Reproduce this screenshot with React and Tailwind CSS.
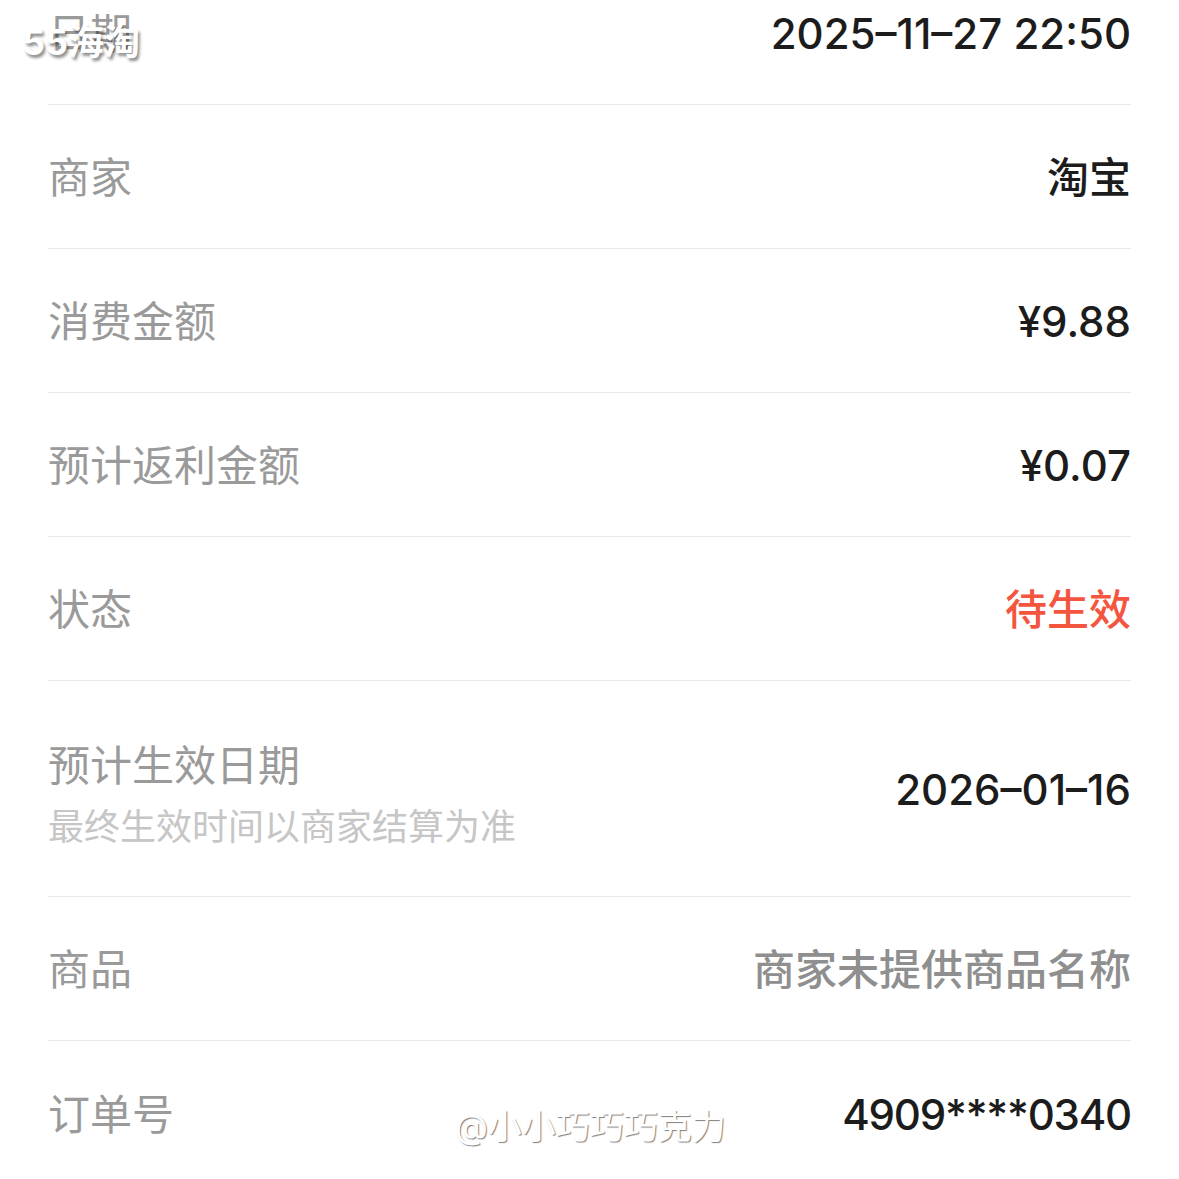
import React from 'react'

const rows = [
  { label: '日期', value: '2025–11–27 22:50' },
  { label: '商家', value: '淘宝' },
  { label: '消费金额', value: '¥9.88' },
  { label: '预计返利金额', value: '¥0.07' },
  { label: '状态', value: '待生效', tone: 'red' },
  { label: '预计生效日期', sub: '最终生效时间以商家结算为准', value: '2026–01–16', tall: true },
  { label: '商品', value: '商家未提供商品名称', tone: 'muted' },
  { label: '订单号', value: '4909****0340', tight: true },
]

const valueTone = {
  red: 'text-[#f4553e]',
  muted: 'text-[#8f8f8f]',
}

const Row = ({ row, last }) => (
  <div
    className={`flex items-center justify-between pt-[3px] ${row.tall ? 'h-[216px]' : 'h-[144px]'} ${
      last ? '' : 'border-b border-[#e9e9e9]'
    }`}
  >
    <div className={`flex flex-col ${row.sub ? 'pt-[9px]' : ''}`}>
      <span className="text-[42px] leading-[56px] text-[#9a9a9a]">{row.label}</span>
      {row.sub && (
        <span className="mt-[9px] text-[36px] leading-[48px] text-[#c6c6c6]">{row.sub}</span>
      )}
    </div>
    <span
      className={`text-[42px] font-medium leading-[56px] ${row.tight ? 'tracking-[-1.2px]' : ''} ${
        valueTone[row.tone] || 'text-[#1c1c1c]'
      }`}
    >
      {row.value}
    </span>
  </div>
)

const App = () => {
  return (
    <div
      className="relative h-[1179px] w-[1179px] overflow-hidden bg-white"
      style={{ fontFamily: 'Inter, "Noto Sans CJK SC", sans-serif' }}
    >
      <div className="-mt-[39px] pl-[48px] pr-[48px]">
        {rows.map((row, i) => (
          <Row key={row.label} row={row} last={i === rows.length - 1} />
        ))}
      </div>

      {/* watermarks */}
      <div className="absolute left-[22px] top-[16px] text-[36px] font-bold leading-[52px] text-white [text-shadow:2px_3px_3px_rgba(0,0,0,0.45)]">
        55海淘
      </div>
      <div className="absolute left-[455px] top-[1102px] text-[34px] leading-[50px] text-white [text-shadow:1px_1px_1px_rgba(0,0,0,0.5)]">
        @小小巧巧巧克力
      </div>
    </div>
  )
}

export default App
